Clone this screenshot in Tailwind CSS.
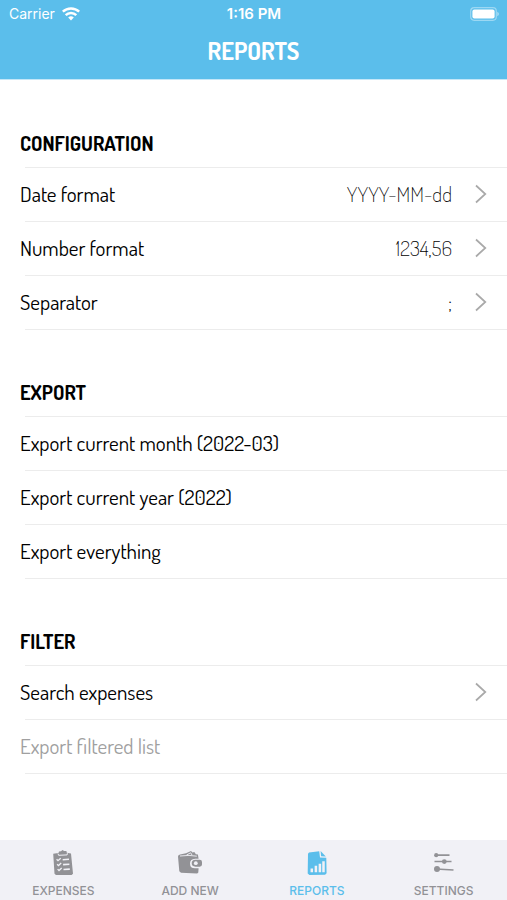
<!DOCTYPE html>
<html lang="en">
<head>
<meta charset="utf-8">
<meta name="viewport" content="width=device-width, initial-scale=1">
<title>Reports</title>
<script src="https://cdn.jsdelivr.net/npm/@tailwindcss/browser@4"></script>
</head>
<body class="min-h-screen flex flex-col bg-white text-black font-[Dosis,'Liberation_Sans_Narrow',Roboto,sans-serif]">
<header class="h-20 shrink-0 bg-[#5bbeeb] border-b border-[#c4e7f8] text-white">
  <div class="grid grid-cols-3 items-center h-7 pl-[9px] pr-2 font-[Inter,sans-serif] text-sm">
    <div class="flex items-center gap-[7px]">
      <span>Carrier</span>
      <svg class="w-[18px] h-[14px]" viewBox="0 0 18 14" fill="none" stroke="currentColor" stroke-width="2.5" aria-label="Wi-Fi"><path d="M.8 4.7a11.8 11.8 0 0 1 16.4 0M3.7 8.1a7.6 7.6 0 0 1 10.6 0"/><path d="M9 13.4 6.2 10.6a4 4 0 0 1 5.6 0z" fill="currentColor" stroke="none"/></svg>
    </div>
    <time class="text-center text-[15px] font-semibold">1:16 PM</time>
    <svg class="justify-self-end w-[29px] h-[14px]" viewBox="0 0 29 14" aria-label="Battery full"><rect x=".7" y=".7" width="25.6" height="12.6" rx="3.5" fill="none" stroke="#fff" stroke-opacity=".4" stroke-width="1.2"/><rect x="2.4" y="2.4" width="22.2" height="9.2" rx="2" fill="#fff"/><path d="M27.3 4.8q1.6 1 1.6 2.2t-1.6 2.2z" fill="#fff" fill-opacity=".5"/></svg>
  </div>
  <h1 class="text-center text-2xl leading-[46px] font-bold">REPORTS</h1>
</header>
<main class="flex-1 pt-px text-[21px] leading-7">
  <section>
    <h2 class="h-[86px] pl-5 pt-12 text-xl leading-7 font-bold">CONFIGURATION</h2>
    <ul class="ml-[25px] border-t border-[#ececec]">
      <li class="border-b border-[#ececec]"><button class="-ml-[5px] w-full h-[53px] pr-[15px] pb-0.5 flex items-center text-left"><span class="flex-1">Date format</span><span class="font-extralight mr-[23px]">YYYY-MM-dd</span><svg class="w-3 h-5 text-[#a9a9a9]" viewBox="0 0 12 20" fill="none" stroke="currentColor" stroke-width="1.7"><path d="m1 1.5 9.3 8.5L1 18.5"/></svg></button></li>
      <li class="border-b border-[#ececec]"><button class="-ml-[5px] w-full h-[53px] pr-[15px] pb-0.5 flex items-center text-left"><span class="flex-1">Number format</span><span class="font-extralight mr-[23px]">1234,56</span><svg class="w-3 h-5 text-[#a9a9a9]" viewBox="0 0 12 20" fill="none" stroke="currentColor" stroke-width="1.7"><path d="m1 1.5 9.3 8.5L1 18.5"/></svg></button></li>
      <li class="border-b border-[#ececec]"><button class="-ml-[5px] w-full h-[53px] pr-[15px] pb-0.5 flex items-center text-left"><span class="flex-1">Separator</span><span class="font-extralight mr-[23px]">;</span><svg class="w-3 h-5 text-[#a9a9a9]" viewBox="0 0 12 20" fill="none" stroke="currentColor" stroke-width="1.7"><path d="m1 1.5 9.3 8.5L1 18.5"/></svg></button></li>
    </ul>
  </section>
  <section>
    <h2 class="h-[86px] pl-5 pt-12 text-xl leading-7 font-bold">EXPORT</h2>
    <ul class="ml-[25px] border-t border-[#ececec]">
      <li class="border-b border-[#ececec]"><button class="-ml-[5px] w-full h-[53px] pb-0.5 text-left">Export current month (2022-03)</button></li>
      <li class="border-b border-[#ececec]"><button class="-ml-[5px] w-full h-[53px] pb-0.5 text-left">Export current year (2022)</button></li>
      <li class="border-b border-[#ececec]"><button class="-ml-[5px] w-full h-[53px] pb-0.5 text-left">Export everything</button></li>
    </ul>
  </section>
  <section>
    <h2 class="h-[86px] pl-5 pt-12 text-xl leading-7 font-bold">FILTER</h2>
    <ul class="ml-[25px] border-t border-[#ececec]">
      <li class="border-b border-[#ececec]"><button class="-ml-[5px] w-full h-[53px] pr-[15px] pb-0.5 flex items-center text-left"><span class="flex-1">Search expenses</span><svg class="w-3 h-5 text-[#a9a9a9]" viewBox="0 0 12 20" fill="none" stroke="currentColor" stroke-width="1.7"><path d="m1 1.5 9.3 8.5L1 18.5"/></svg></button></li>
      <li class="border-b border-[#ececec]"><button disabled class="-ml-[5px] w-full h-[53px] pb-0.5 text-left text-[#a0a0a0]">Export filtered list</button></li>
    </ul>
  </section>
</main>
<nav class="h-[60px] shrink-0 grid grid-cols-4 bg-[#f1f1f6] text-[#929296] font-[Inter,sans-serif] text-xs font-medium">
  <a href="#expenses" class="flex flex-col items-center pt-[10px] gap-[5px]">
    <svg class="w-[26px] h-[26px]" viewBox="0 0 26 26"><path d="M3.2 3.8 8.5 3l.5-1.5 2-.3L12.5 0l1.6 1 2.3.1.4 1.6 4.2.8 2 20.2-1.4 1.3H6L4.5 23.7z" fill="currentColor"/><g fill="none" stroke="#f1f1f6"><path d="m8 3.6.6 1.7 8.5-.4.3-1.7" stroke-width="1"/><path d="m6.6 9.3 1.4 1.4 2.7-2.5M7.1 14.2l1.4 1.4 2.7-2.5M7.6 19.1 9 20.5l2.7-2.5" stroke-width="1.3"/><path d="m12.7 9.7 6.3-.4m-5.9 5.3 6.3-.4m-5.9 5.3 6.3-.4" stroke-width="1.6"/></g></svg>
    <span class="leading-5">EXPENSES</span>
  </a>
  <a href="#add" class="flex flex-col items-center pt-[10px] gap-[5px]">
    <svg class="w-[26px] h-[26px]" viewBox="0 0 26 26"><path d="M1 6.5q0-1.7 2-2l6-1.2 5-2.3 1.5 1.5 1.8-.4 1.6 2.2 2 .3.7 4.2h-3.4q-5.2.4-5.2 4.6 0 4.8 5 4.9h3.6l-.3 4.3-1.1 1L4 22.8l-1.7-1.5z" fill="currentColor"/><path d="m3 6 9-.6 7.8.8M9.5 5l4.2-2.2L15 5" fill="none" stroke="#f1f1f6" stroke-width=".9"/><path d="M18.3 9.8h4.4q2.3.1 2.3 2.2v2.6q0 2-2.3 2.1h-4.2q-3.8-.2-3.8-3.4t3.6-3.5z" fill="currentColor"/><circle cx="18.8" cy="13.2" r="1.9" fill="#f1f1f6"/></svg>
    <span class="leading-5">ADD NEW</span>
  </a>
  <a href="#reports" aria-current="page" class="flex flex-col items-center pt-[10px] gap-[5px] text-[#5bbeeb]">
    <svg class="w-[26px] h-[26px]" viewBox="0 0 26 26"><path d="m5 2.5 10.2-1.2.8 6.2 6.3.2.3 15.5-1.5 1.6-15.7.2-1.7-1.4L4 3.8z" fill="currentColor"/><path d="m16.6 1 5.2 5.4-4.7-.2z" fill="currentColor"/><path d="M7.8 18.5v3.8m4.1-6.5v6.5m4-8.5v8.5m3.6-11v11" stroke="#f1f1f6" stroke-width="2.5"/></svg>
    <span class="leading-5">REPORTS</span>
  </a>
  <a href="#settings" class="flex flex-col items-center pt-[10px] gap-[5px]">
    <svg class="w-[26px] h-[26px]" viewBox="0 0 26 26" fill="currentColor" stroke="currentColor"><path d="M5 5.2h13.5M3.5 11.5h17M5 19l17.5 1" fill="none" stroke-width="1.7"/><g stroke="none"><circle cx="5.2" cy="5.2" r="2.1"/><circle cx="13.3" cy="11.6" r="2.4"/><circle cx="6" cy="19" r="3"/></g></svg>
    <span class="leading-5">SETTINGS</span>
  </a>
</nav>
</body>
</html>
